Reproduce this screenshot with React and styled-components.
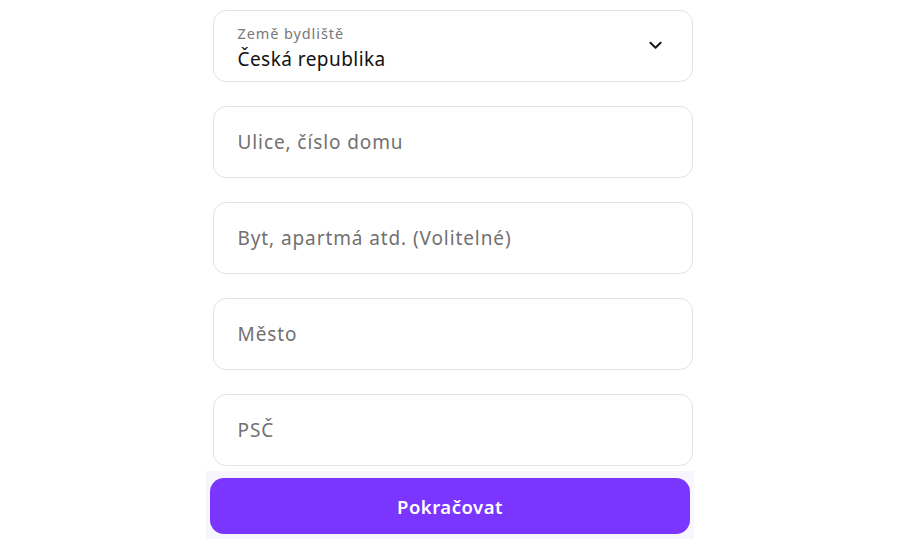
import React from "react";
import styled, { createGlobalStyle } from "styled-components";

const GlobalStyle = createGlobalStyle`
	html, body {
		margin: 0;
		padding: 0;
		background: #ffffff;
		font-family: "Noto Sans", "Lato", sans-serif;
	}
`;

const fields = ["Ulice, číslo domu", "Byt, apartmá atd. (Volitelné)", "Město", "PSČ"];

const App = () => {
	return (
		<>
			<GlobalStyle />
			<Page>
				<Form>
					<Select>
						<SelectText>
							<Label>Země bydliště</Label>
							<Value>Česká republika</Value>
						</SelectText>
						<Chevron viewBox="0 0 14 9">
							<path d="M1.5 1.5 L7 7 L12.5 1.5" fill="none" stroke="#1a1a1a" strokeWidth="2.2" strokeLinecap="round" strokeLinejoin="round" />
						</Chevron>
					</Select>
					{fields.map((f) => (
						<Field key={f}>
							<Input placeholder={f} />
						</Field>
					))}
				</Form>
				<Footer>
					<Button>Pokračovat</Button>
				</Footer>
			</Page>
		</>
	);
};

export default App;

const Page = styled.div`
	width: 900px;
	height: 543px;
	display: flex;
	flex-direction: column;
	align-items: center;
	padding-top: 10px;
	box-sizing: border-box;
	overflow: hidden;
`;

const Form = styled.div`
	width: 480px;
	margin-left: 5px;
	display: flex;
	flex-direction: column;
	gap: 24px;
`;

const Select = styled.div`
	height: 72px;
	box-sizing: border-box;
	border: 1px solid #e3e3e3;
	border-radius: 13px;
	padding: 0 30px 0 24px;
	display: flex;
	align-items: center;
	justify-content: space-between;
`;

const SelectText = styled.div`
	display: flex;
	flex-direction: column;
	padding-top: 3px;
`;

const Label = styled.span`
	font-size: 14.5px;
	color: #787878;
	line-height: 18px;
	letter-spacing: 0.9px;
`;

const Value = styled.span`
	font-size: 19px;
	color: #111111;
	line-height: 26px;
	margin-top: 4px;
	letter-spacing: 0.45px;
`;

const Chevron = styled.svg`
	width: 13px;
	height: 9px;
	margin-top: -2px;
`;

const Field = styled.div`
	height: 72px;
	box-sizing: border-box;
	border: 1px solid #e3e3e3;
	border-radius: 13px;
	display: flex;
	align-items: center;
	padding: 0 24px;
`;

const Input = styled.input`
	border: none;
	outline: none;
	width: 100%;
	background: transparent;
	font-family: "Noto Sans", "Lato", sans-serif;
	font-size: 19px;
	color: #111;
	padding: 0;
	letter-spacing: 0.9px;

	&::placeholder {
		color: #727070;
	}
`;

const Footer = styled.div`
	width: 488px;
	margin-top: 5px;
	padding: 7px 4px 5px 4px;
	box-sizing: border-box;
	background: #f7f5fe;
	display: flex;
	justify-content: flex-start;
`;

const Button = styled.button`
	width: 480px;
	height: 56px;
	border: none;
	border-radius: 14px;
	background: #7a36ff;
	color: #ffffff;
	font-family: "Noto Sans", "Lato", sans-serif;
	font-size: 18.5px;
	font-weight: 600;
	letter-spacing: 0.5px;
	cursor: pointer;
`;
